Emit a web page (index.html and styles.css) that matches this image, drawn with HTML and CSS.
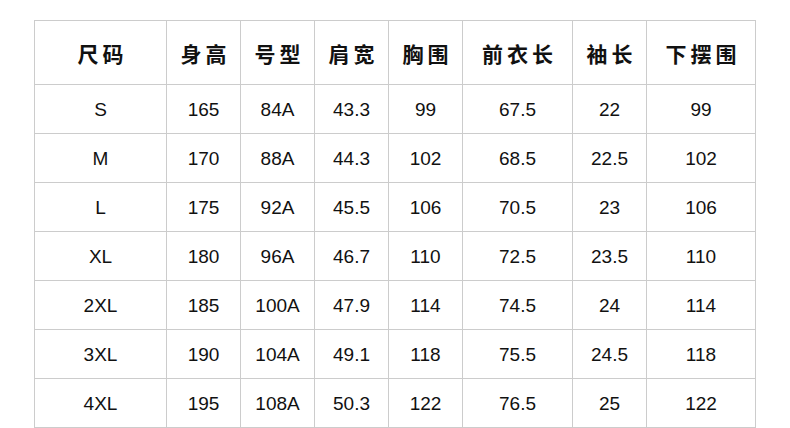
FILE: index.html
```html
<!DOCTYPE html>
<html lang="zh">
<head>
<meta charset="utf-8">
<title>尺码表</title>
<link rel="stylesheet" href="styles.css">
</head>
<body>
<div class="size-table">
  <div class="cell head">尺码</div>
  <div class="cell head">身高</div>
  <div class="cell head">号型</div>
  <div class="cell head">肩宽</div>
  <div class="cell head">胸围</div>
  <div class="cell head">前衣长</div>
  <div class="cell head">袖长</div>
  <div class="cell head">下摆围</div>

  <div class="cell">S</div><div class="cell">165</div><div class="cell">84A</div><div class="cell">43.3</div><div class="cell">99</div><div class="cell">67.5</div><div class="cell">22</div><div class="cell">99</div>
  <div class="cell">M</div><div class="cell">170</div><div class="cell">88A</div><div class="cell">44.3</div><div class="cell">102</div><div class="cell">68.5</div><div class="cell">22.5</div><div class="cell">102</div>
  <div class="cell">L</div><div class="cell">175</div><div class="cell">92A</div><div class="cell">45.5</div><div class="cell">106</div><div class="cell">70.5</div><div class="cell">23</div><div class="cell">106</div>
  <div class="cell">XL</div><div class="cell">180</div><div class="cell">96A</div><div class="cell">46.7</div><div class="cell">110</div><div class="cell">72.5</div><div class="cell">23.5</div><div class="cell">110</div>
  <div class="cell">2XL</div><div class="cell">185</div><div class="cell">100A</div><div class="cell">47.9</div><div class="cell">114</div><div class="cell">74.5</div><div class="cell">24</div><div class="cell">114</div>
  <div class="cell">3XL</div><div class="cell">190</div><div class="cell">104A</div><div class="cell">49.1</div><div class="cell">118</div><div class="cell">75.5</div><div class="cell">24.5</div><div class="cell">118</div>
  <div class="cell">4XL</div><div class="cell">195</div><div class="cell">108A</div><div class="cell">50.3</div><div class="cell">122</div><div class="cell">76.5</div><div class="cell">25</div><div class="cell">122</div>
</div>
</body>
</html>
```

FILE: styles.css
```css
html, body {
  margin: 0;
  padding: 0;
  background: #ffffff;
}

body {
  padding: 20px 0 0 34px;
  font-family: "Liberation Sans", "Noto Sans CJK SC", sans-serif;
  color: #111111;
}

.size-table {
  display: grid;
  grid-template-columns: 132px 74px 74px 74px 74px 110px 74px 109px;
  grid-template-rows: 64px repeat(7, 49px);
  width: max-content;
  border-top: 1px solid #cccccc;
  border-left: 1px solid #cccccc;
}

.cell {
  display: flex;
  align-items: center;
  justify-content: center;
  border-right: 1px solid #cccccc;
  border-bottom: 1px solid #cccccc;
  font-size: 19px;
  line-height: 1;
  padding-top: 1px;
}

.head {
  font-family: "Noto Sans CJK SC", sans-serif;
  font-weight: 700;
  font-size: 21px;
  letter-spacing: 4px;
  text-indent: 4px;
  padding-top: 2px;
}
```
